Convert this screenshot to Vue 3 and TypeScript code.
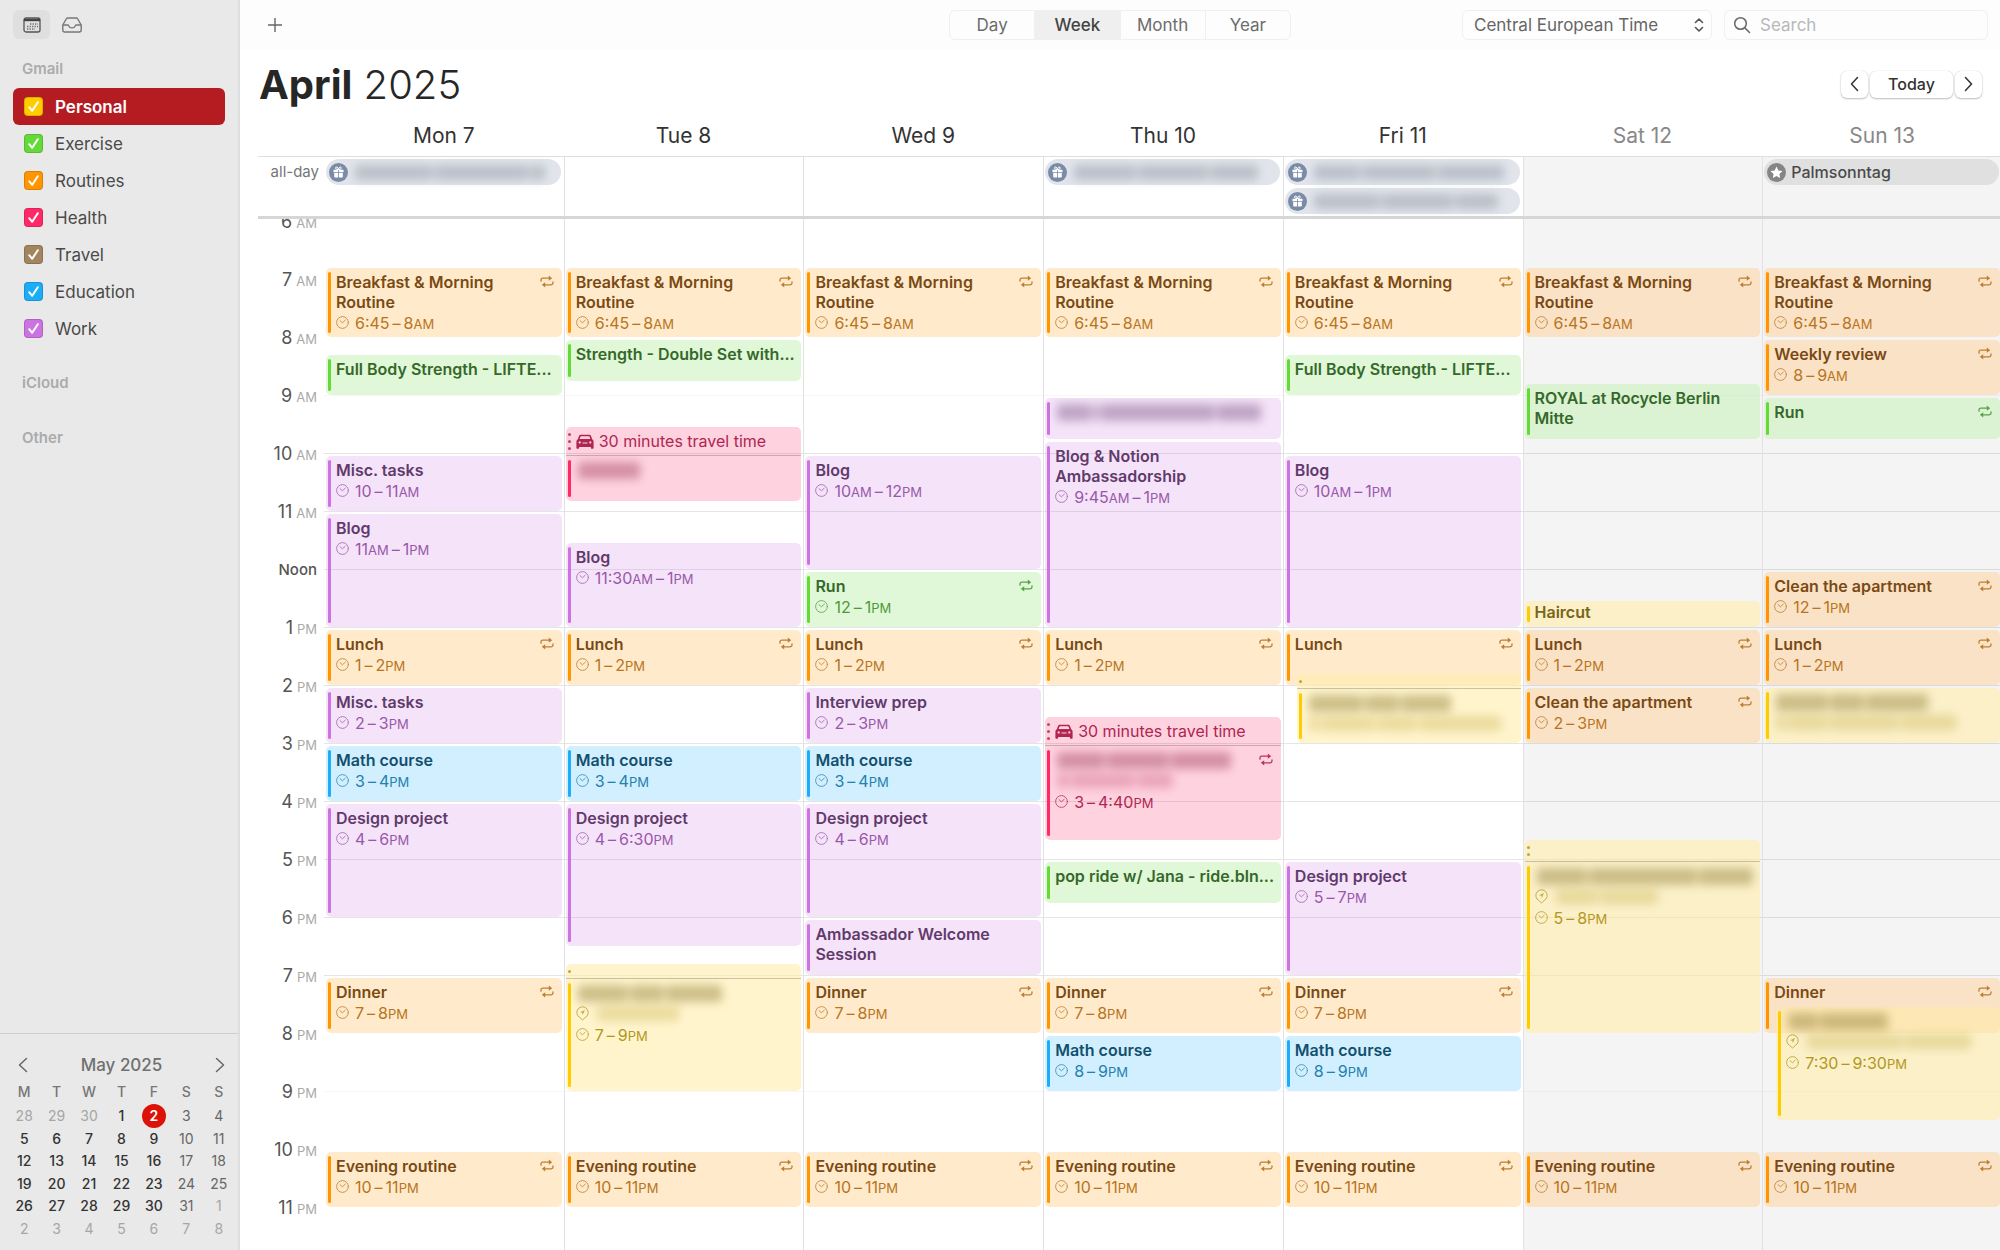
<script setup lang="ts">
import { ref } from 'vue'

type Tone = 'yellow' | 'green' | 'orange' | 'pink' | 'brown' | 'blue' | 'purple'

interface CalendarItem {
  name: string
  tone: Tone
}

interface CalendarEvent {
  tone: Tone
  start: number
  end: number
  title?: string
  /* word widths of a hidden title or place */
  hiddenTitle?: number[]
  hiddenPlace?: number[]
  pin?: boolean
  from?: string
  fromUnit?: string
  to?: string
  toUnit?: string
  repeats?: boolean
  travel?: number
  travelLabel?: string
  dots?: number
  inset?: boolean
  compact?: boolean
}

interface AllDayItem {
  kind: 'birthday' | 'holiday'
  title?: string
  hidden?: number[]
}

interface Day {
  label: string
  weekend: boolean
  allDay: AllDayItem[]
  events: CalendarEvent[]
}

const HOUR = 58
const FIRST_HOUR = 6

const px = (hours: number): number => Math.round(hours * HOUR)
const row = (time: number): number => px(time - FIRST_HOUR) + 3

const calendars: CalendarItem[] = [
  { name: 'Personal', tone: 'yellow' },
  { name: 'Exercise', tone: 'green' },
  { name: 'Routines', tone: 'orange' },
  { name: 'Health', tone: 'pink' },
  { name: 'Travel', tone: 'brown' },
  { name: 'Education', tone: 'blue' },
  { name: 'Work', tone: 'purple' },
]
const checked = ref<string[]>(calendars.map((c) => c.name))
const selected = ref('Personal')

const views = ['Day', 'Week', 'Month', 'Year']
const view = ref('Week')
const timezone = ref('Central European Time')
const query = ref('')

const hours = Array.from({ length: 18 }, (_, i) => {
  const h = FIRST_HOUR + i
  return { h, number: h > 12 ? h - 12 : h, unit: h < 12 ? 'AM' : 'PM' }
})
const lineTone = (h: number): string => (h >= 10 && h <= 19 ? 'strong' : h === 9 || h === 21 ? 'faint' : '')

const routine = (title: string, start: number, end: number, from: string, to: string, toUnit: string): CalendarEvent => ({
  tone: 'orange', title, start, end, from, to, toUnit, repeats: true,
})
const breakfast = () => routine('Breakfast & Morning Routine', 6.75, 8, '6:45', '8', 'AM')
const lunch = () => routine('Lunch', 13, 14, '1', '2', 'PM')
const dinner = () => routine('Dinner', 19, 20, '7', '8', 'PM')
const evening = () => routine('Evening routine', 22, 23, '10', '11', 'PM')
const work = (title: string, start: number, end: number, from: string, fromUnit: string, to: string, toUnit: string): CalendarEvent => ({
  tone: 'purple', title, start, end, from, fromUnit, to, toUnit,
})
const math = (start: number, from: string, to: string): CalendarEvent => ({
  tone: 'blue', title: 'Math course', start, end: start + 1, from, to, toUnit: 'PM',
})
const sport = (title: string, start: number, end: number, repeats = false): CalendarEvent => ({
  tone: 'green', title, start, end, repeats,
})

const days: Day[] = [
  {
    label: 'Mon 7',
    weekend: false,
    allDay: [{ kind: 'birthday', hidden: [78, 94, 14] }],
    events: [
      breakfast(),
      sport('Full Body Strength - LIFTE...', 8.25, 9),
      work('Misc. tasks', 10, 11, '10', '', '11', 'AM'),
      work('Blog', 11, 13, '11', 'AM', '1', 'PM'),
      lunch(),
      work('Misc. tasks', 14, 15, '2', '', '3', 'PM'),
      math(15, '3', '4'),
      work('Design project', 16, 18, '4', '', '6', 'PM'),
      dinner(),
      evening(),
    ],
  },
  {
    label: 'Tue 8',
    weekend: false,
    allDay: [],
    events: [
      breakfast(),
      sport('Strength - Double Set with...', 8, 8.75),
      { tone: 'pink', start: 9.5, end: 10.8334, travel: 0.5, travelLabel: '30 minutes travel time', dots: 3, hiddenTitle: [62] },
      work('Blog', 11.5, 13, '11:30', 'AM', '1', 'PM'),
      lunch(),
      math(15, '3', '4'),
      work('Design project', 16, 18.5, '4', '', '6:30', 'PM'),
      { tone: 'yellow', start: 18.75, end: 21, travel: 0.25, dots: 1, hiddenTitle: [50, 34, 56], hiddenPlace: [82], pin: true, from: '7', to: '9', toUnit: 'PM' },
      evening(),
    ],
  },
  {
    label: 'Wed 9',
    weekend: false,
    allDay: [],
    events: [
      breakfast(),
      work('Blog', 10, 12, '10', 'AM', '12', 'PM'),
      { ...sport('Run', 12, 13, true), from: '12', to: '1', toUnit: 'PM' },
      lunch(),
      work('Interview prep', 14, 15, '2', '', '3', 'PM'),
      math(15, '3', '4'),
      work('Design project', 16, 18, '4', '', '6', 'PM'),
      { tone: 'purple', title: 'Ambassador Welcome Session', start: 18, end: 19 },
      dinner(),
      evening(),
    ],
  },
  {
    label: 'Thu 10',
    weekend: false,
    allDay: [{ kind: 'birthday', hidden: [62, 70, 48] }],
    events: [
      breakfast(),
      { tone: 'purple', start: 9, end: 9.75, hiddenTitle: [34, 6, 114, 44] },
      work('Blog & Notion Ambassadorship', 9.75, 13, '9:45', 'AM', '1', 'PM'),
      lunch(),
      { tone: 'pink', start: 14.5, end: 16.6667, travel: 0.5, travelLabel: '30 minutes travel time', dots: 3, hiddenTitle: [48, 62, 60], hiddenPlace: [12, 64, 36], from: '3', to: '4:40', toUnit: 'PM', repeats: true },
      sport('pop ride w/ Jana - ride.bln...', 17, 17.75),
      dinner(),
      math(20, '8', '9'),
      evening(),
    ],
  },
  {
    label: 'Fri 11',
    weekend: false,
    allDay: [
      { kind: 'birthday', hidden: [46, 74, 66] },
      { kind: 'birthday', hidden: [66, 72, 42] },
    ],
    events: [
      breakfast(),
      sport('Full Body Strength - LIFTE...', 8.25, 9),
      work('Blog', 10, 13, '10', 'AM', '1', 'PM'),
      { tone: 'orange', title: 'Lunch', start: 13, end: 14, repeats: true },
      { tone: 'yellow', start: 13.75, end: 15, travel: 0.25, dots: 1, inset: true, hiddenTitle: [54, 34, 50], hiddenPlace: [10, 54, 40, 82] },
      work('Design project', 17, 19, '5', '', '7', 'PM'),
      dinner(),
      math(20, '8', '9'),
      evening(),
    ],
  },
  {
    label: 'Sat 12',
    weekend: true,
    allDay: [],
    events: [
      breakfast(),
      sport('ROYAL at Rocycle Berlin Mitte', 8.75, 9.75),
      { tone: 'yellow', title: 'Haircut', start: 12.5, end: 13, compact: true },
      lunch(),
      routine('Clean the apartment', 14, 15, '2', '3', 'PM'),
      { tone: 'yellow', start: 16.62, end: 20, travel: 0.38, dots: 2, hiddenTitle: [50, 108, 54], hiddenPlace: [42, 58], pin: true, from: '5', to: '8', toUnit: 'PM' },
      evening(),
    ],
  },
  {
    label: 'Sun 13',
    weekend: true,
    allDay: [{ kind: 'holiday', title: 'Palmsonntag' }],
    events: [
      breakfast(),
      routine('Weekly review', 8, 9, '8', '9', 'AM'),
      sport('Run', 9, 9.75, true),
      routine('Clean the apartment', 12, 13, '12', '1', 'PM'),
      lunch(),
      { tone: 'yellow', start: 14, end: 15, hiddenTitle: [52, 34, 62], hiddenPlace: [10, 38, 70, 56] },
      { tone: 'orange', title: 'Dinner', start: 19, end: 20, repeats: true },
      { tone: 'yellow', start: 19.5, end: 21.5, inset: true, hiddenTitle: [30, 68], hiddenPlace: [96, 66], pin: true, from: '7:30', to: '9:30', toUnit: 'PM' },
      evening(),
    ],
  },
]

const weekdays = ['M', 'T', 'W', 'T', 'F', 'S', 'S']
const weeks: number[][] = [
  [28, 29, 30, 1, 2, 3, 4],
  [5, 6, 7, 8, 9, 10, 11],
  [12, 13, 14, 15, 16, 17, 18],
  [19, 20, 21, 22, 23, 24, 25],
  [26, 27, 28, 29, 30, 31, 1],
  [2, 3, 4, 5, 6, 7, 8],
]
const dateClass = (w: number, d: number, date: number): string => {
  if ((w === 0 && date > 20) || (w > 3 && date < 20)) return 'outside'
  if (w === 0 && date === 2) return 'today'
  return d > 4 ? 'rest' : ''
}
</script>

<template>
  <div class="app">
    <aside class="sidebar">
      <div class="modes">
        <button class="mode active" type="button" aria-label="Calendars">
          <svg width="18" height="16" viewBox="0 0 18 16" fill="none">
            <rect x="1" y="1" width="16" height="14" rx="2" stroke="#555" stroke-width="1.3" />
            <path d="M1 1.8h16v2.4H1z" fill="#444" />
            <path d="M7 7h8M4 9.5h11M4 12h8" stroke="#777" stroke-width="1.3" stroke-dasharray="1.4 1.1" />
          </svg>
        </button>
        <button class="mode" type="button" aria-label="Inbox">
          <svg width="20" height="16" viewBox="0 0 20 16" fill="none" stroke="#777" stroke-width="1.4" stroke-linejoin="round">
            <path d="M.8 8 4.2 2Q4.8 1 6 1h8q1.200 0 1.800 1l3.400 6v5q0 2-2 2H2.800q-2 0-2-2z" />
            <path d="M.8 8h4.700q1 0 1.300.9.800 2 3.200 2t3.200-2q.3-.9 1.300-.9h4.700" />
          </svg>
        </button>
      </div>

      <h2 class="group">Gmail</h2>
      <ul class="calendars">
        <li v-for="cal in calendars" :key="cal.name" class="calendar" :class="{ selected: cal.name === selected }">
          <label class="calendar-label" :class="cal.tone">
            <span class="check">
              <input v-model="checked" type="checkbox" :value="cal.name" />
              <svg width="19" height="19" viewBox="0 0 19 19" fill="none" stroke="#fff" stroke-width="2" stroke-linecap="round" stroke-linejoin="round">
                <path d="m5.200 10.200 3 3.600 5.600-8.600" />
              </svg>
            </span>
            {{ cal.name }}
          </label>
        </li>
      </ul>
      <h2 class="group spaced">iCloud</h2>
      <h2 class="group spaced">Other</h2>

      <section class="mini">
        <header class="mini-head">
          <button class="plain" type="button" aria-label="Previous month">
            <svg width="10" height="16" viewBox="0 0 10 16" fill="none" stroke="#666" stroke-width="1.500" stroke-linecap="round" stroke-linejoin="round"><path d="M8.500 1.500 1.500 8l7 6.500" /></svg>
          </button>
          <h3>May 2025</h3>
          <button class="plain" type="button" aria-label="Next month">
            <svg width="10" height="16" viewBox="0 0 10 16" fill="none" stroke="#666" stroke-width="1.500" stroke-linecap="round" stroke-linejoin="round"><path d="M1.500 1.500 8.500 8l-7 6.500" /></svg>
          </button>
        </header>
        <table class="month">
          <thead>
            <tr><th v-for="(d, i) in weekdays" :key="i" scope="col">{{ d }}</th></tr>
          </thead>
          <tbody>
            <tr v-for="(week, w) in weeks" :key="w">
              <td v-for="(date, d) in week" :key="d"><span class="date" :class="dateClass(w, d, date)">{{ date }}</span></td>
            </tr>
          </tbody>
        </table>
      </section>
    </aside>

    <main class="main">
      <header class="toolbar">
        <button class="plain add" type="button" aria-label="New event">
          <svg width="16" height="16" viewBox="0 0 16 16" stroke="#666" stroke-width="1.400"><path d="M8 1v14M1 8h14" /></svg>
        </button>
        <div class="segments">
          <button v-for="v in views" :key="v" type="button" class="segment" :class="{ on: v === view }" :aria-pressed="v === view" @click="view = v">{{ v }}</button>
        </div>
        <div class="tools">
          <div class="zone">
            <select v-model="timezone" aria-label="Time zone">
              <option>Central European Time</option>
            </select>
            <svg width="10" height="16" viewBox="0 0 10 16" fill="none" stroke="#555" stroke-width="1.600" stroke-linecap="round" stroke-linejoin="round"><path d="M1.500 5.500 5 2l3.500 3.500M1.500 10.500 5 14l3.500-3.500" /></svg>
          </div>
          <label class="search">
            <svg width="18" height="18" viewBox="0 0 18 18" fill="none" stroke="#666" stroke-width="1.500" stroke-linecap="round"><circle cx="7.500" cy="7.500" r="5.800" /><path d="m12 12 4.500 4.500" /></svg>
            <input v-model="query" type="text" placeholder="Search" aria-label="Search" />
          </label>
        </div>
      </header>

      <div class="heading">
        <h1><b>April</b> 2025</h1>
        <nav class="pager">
          <button type="button" class="step" aria-label="Previous week">
            <svg width="9" height="16" viewBox="0 0 9 16" fill="none" stroke="#333" stroke-width="1.500" stroke-linecap="round" stroke-linejoin="round"><path d="M7.500 1.500 1.500 8l6 6.500" /></svg>
          </button>
          <button type="button" class="today-button">Today</button>
          <button type="button" class="step" aria-label="Next week">
            <svg width="9" height="16" viewBox="0 0 9 16" fill="none" stroke="#333" stroke-width="1.500" stroke-linecap="round" stroke-linejoin="round"><path d="m1.500 1.500 6 6.500-6 6.500" /></svg>
          </button>
        </nav>
      </div>

      <div class="week">
        <div class="columns names">
          <span></span>
          <h2 v-for="day in days" :key="day.label" :class="{ weekend: day.weekend }">{{ day.label }}</h2>
        </div>

        <div class="columns all-day">
          <span class="all-day-label">all-day</span>
          <div v-for="day in days" :key="day.label" class="all-day-cell" :class="{ weekend: day.weekend }">
            <div v-for="(item, i) in day.allDay" :key="i" class="pill" :class="item.kind">
              <svg v-if="item.kind === 'birthday'" width="19" height="19" viewBox="0 0 19 19">
                <circle cx="9.500" cy="9.500" r="9.500" fill="#7a8ba8" />
                <path d="M4.500 6.800h4.600v2.400H4.500zM9.900 6.800h4.600v2.400H9.900zM5.200 9.900h3.900v4.600H6q-.8 0-.8-.8zM9.900 9.900h3.900v3.800q0 .8-.8.8H9.900z" fill="#fff" />
                <path d="M9.400 6.600Q6.400 6.600 6.500 5q.2-1.200 1.400-1 1.200.3 1.500 2.600.3-2.300 1.500-2.600 1.200-.2 1.400 1 .1 1.600-2.900 1.600" fill="none" stroke="#fff" />
              </svg>
              <svg v-else width="19" height="19" viewBox="0 0 19 19">
                <circle cx="9.500" cy="9.500" r="9.500" fill="#858585" />
                <path d="m9.500 3.600 1.800 3.900 4.200.5-3.100 2.900.8 4.200-3.700-2.100-3.700 2.100.8-4.200-3.100-2.900 4.200-.5z" fill="#fff" />
              </svg>
              <span v-if="item.title">{{ item.title }}</span>
              <span v-else class="hidden-line"><i v-for="(w, k) in item.hidden" :key="k" :style="{ width: w + 'px' }"></i></span>
            </div>
          </div>
        </div>

        <div class="columns schedule">
          <div class="hours">
            <div v-for="hour in hours" :key="hour.h" class="hour">
              <span v-if="hour.h === 12" class="noon">Noon</span>
              <template v-else>{{ hour.number }}<small>{{ hour.unit }}</small></template>
            </div>
          </div>
          <div class="lines">
            <div v-for="hour in hours" :key="hour.h" class="line" :class="lineTone(hour.h)"></div>
          </div>
          <div v-for="(day, c) in days" :key="day.label" class="day" :class="{ weekend: day.weekend }" :style="{ gridColumn: c + 2 }">
            <article
              v-for="(event, i) in day.events"
              :key="i"
              class="event"
              :class="[event.tone, { inset: event.inset, compact: event.compact }]"
              :style="{ gridRow: `${row(event.start)} / ${row(event.end)}` }"
            >
              <div v-if="event.travel" class="travel" :style="{ height: px(event.travel) + 'px' }">
                <span class="dots"><i v-for="n in event.dots" :key="n"></i></span>
                <template v-if="event.travelLabel">
                  <svg width="18" height="15" viewBox="0 0 18 15" fill="currentColor">
                    <path fill-rule="evenodd" d="M4.600.8h8.800q1.100 0 1.500 1l1.300 3.400Q17.600 6 17.600 7.500V14q0 .7-.7.700h-1.300q-.7 0-.7-.7v-1.100H3.100V14q0 .7-.7.700H1.100q-.7 0-.7-.7V7.500Q.4 6 1.800 5.200L3.100 1.800q.4-1 1.500-1M4.700 2.300 3.600 5h10.800l-1.100-2.700zM3.700 7.300a1.100 1.100 0 1 0 .01 0M14.300 7.300a1.100 1.100 0 1 0 .01 0M6.500 8.400v1.200h5V8.400z" />
                  </svg>
                  <span>{{ event.travelLabel }}</span>
                </template>
              </div>
              <div class="body">
                <span class="bar"></span>
                <div class="content">
                  <h3 v-if="event.title">{{ event.title }}</h3>
                  <p v-else class="hidden-line title-line"><i v-for="(w, k) in event.hiddenTitle" :key="k" :style="{ width: w + 'px' }"></i></p>
                  <p v-if="event.hiddenPlace" class="meta">
                    <svg v-if="event.pin" class="glyph" width="13" height="15" viewBox="0 0 13 15" fill="none" stroke="currentColor">
                      <path d="M6.500 14 3.900 11.600a5.700 5.700 0 1 1 5.200 0z" />
                      <path d="m9 4-5 2.200 2.300.5.500 2.300z" fill="currentColor" stroke="none" />
                    </svg>
                    <span class="hidden-line place-line"><i v-for="(w, k) in event.hiddenPlace" :key="k" :style="{ width: w + 'px' }"></i></span>
                  </p>
                  <p v-if="event.from" class="meta">
                    <svg class="glyph" width="13" height="13" viewBox="0 0 13 13" fill="none" stroke="currentColor" stroke-linecap="round">
                      <circle cx="6.500" cy="6.500" r="5.900" />
                      <path d="M4 4.600 6.400 6.800 9.300 4.200" />
                    </svg>
                    <time>{{ event.from }}<small>{{ event.fromUnit }}</small><span class="dash">–</span>{{ event.to }}<small>{{ event.toUnit }}</small></time>
                  </p>
                </div>
                <svg v-if="event.repeats" class="repeat" width="14" height="13" viewBox="0 0 14 13" fill="none" stroke="currentColor" stroke-width="1.300" stroke-linecap="round">
                  <path d="M1 6.200V5q0-1.800 1.800-1.800h6.400M13 6.800V8q0 1.800-1.800 1.800H4.800" />
                  <path d="m8.800.6 3.400 2.600-3.400 2.600zM5.200 7.200 1.800 9.800l3.400 2.600z" fill="currentColor" stroke="none" />
                </svg>
              </div>
            </article>
          </div>
        </div>
      </div>
    </main>
  </div>
</template>

<style>
body {
  margin: 0;
  background: #fff;
}
</style>

<style scoped>
.app {
  display: flex;
  height: 100vh;
  overflow: hidden;
  font-family: Inter, 'Liberation Sans', sans-serif;
  color: #4a4a4a;
}
h1, h2, h3, p, ul {
  margin: 0;
  padding: 0;
  font-weight: 400;
}
ul {
  list-style: none;
}
button, input, select {
  font: inherit;
  color: inherit;
  margin: 0;
}
svg {
  flex: none;
  display: block;
}
.plain {
  border: 0;
  padding: 0;
  background: none;
}

/* calendar colours: accent, block fill, title text, detail text */
.yellow { --accent: #fc0; --fill: rgb(255 237 170 / 60%); --ink: #786516; --detail: #b3971c; }
.green { --accent: #63da38; --fill: rgb(99 218 56 / 20%); --ink: #35682a; --detail: #4c9a3a; }
.orange { --accent: #ff9500; --fill: rgb(255 149 0 / 20%); --ink: #7a4a14; --detail: #b87420; }
.pink { --accent: #ff2968; --fill: rgb(255 41 104 / 21%); --ink: #8a1c42; --detail: #b02552; }
.brown { --accent: #a2845e; --fill: rgb(162 132 94 / 20%); --ink: #50402c; --detail: #7c6548; }
.blue { --accent: #1badf8; --fill: rgb(27 173 248 / 20%); --ink: #12506f; --detail: #2480ae; }
.purple { --accent: #cc73e1; --fill: rgb(204 115 225 / 20%); --ink: #613a6c; --detail: #9858aa; }
.weekend .orange { --fill: rgb(254 214 166 / 60%); }
.weekend .green { --fill: rgb(201 242 189 / 60%); }

.sidebar {
  display: flex;
  flex-direction: column;
  flex: none;
  box-sizing: border-box;
  width: 240px;
  background: #e9e9e9;
  border-right: 2px solid #dedede;
}
.modes {
  display: flex;
  gap: 3px;
  padding: 10px 13px 0;
}
.mode {
  display: grid;
  place-items: center;
  width: 37px;
  height: 29px;
  padding: 0;
  border: 0;
  border-radius: 6px;
  background: none;
}
.mode.active {
  background: #dfdfdf;
}
.group {
  padding-left: 22px;
  margin-top: 20px;
  font-size: 15px;
  line-height: 20px;
  font-weight: 600;
  color: #ababab;
}
.group.spaced {
  margin-top: 25px;
  height: 30px;
}
.calendars {
  padding: 9px 13px 1px;
}
.calendar {
  border-radius: 6px;
}
.calendar.selected {
  background: #b51c22;
  color: #fff;
  font-weight: 600;
}
.calendar-label {
  display: flex;
  align-items: center;
  gap: 12px;
  height: 37px;
  padding-left: 11px;
  font-size: 17px;
}
.check {
  display: grid;
}
.check > * {
  grid-area: 1 / 1;
}
.check input {
  appearance: none;
  box-sizing: border-box;
  width: 19px;
  height: 19px;
  border: 1px solid rgb(0 0 0 / 14%);
  border-radius: 4px;
  background: var(--accent);
}
.check svg {
  pointer-events: none;
}

.mini {
  margin-top: auto;
  border-top: 1px solid #cfcfcf;
  padding: 18px 3px 10px 8px;
}
.mini-head {
  display: flex;
  justify-content: space-between;
  align-items: center;
  padding: 0 10px;
  height: 26px;
}
.mini-head h3 {
  font-size: 17px;
  font-weight: 500;
  color: #707070;
}
.month {
  width: 100%;
  height: 161px;
  margin-top: 1px;
  table-layout: fixed;
  border-collapse: collapse;
  font-size: 14px;
  line-height: 20px;
  text-align: center;
}
.month th,
.month td {
  padding: 0;
}
.month th {
  height: 26px;
  font-weight: 500;
  color: #777;
}
.date {
  display: inline-block;
  font-weight: 500;
  color: #333;
}
.date.rest {
  font-weight: 400;
  color: #666;
}
.date.outside {
  font-weight: 400;
  color: #a6a6a6;
}
.date.today {
  width: 24px;
  margin: -2px 0;
  line-height: 24px;
  border-radius: 12px;
  background: #dc1208;
  color: #fff;
  font-weight: 600;
}

.main {
  display: flex;
  flex-direction: column;
  flex: 1;
  min-width: 0;
  overflow: hidden;
  background: #fff;
}
.toolbar {
  display: grid;
  grid-template-columns: 1fr 342px 1fr;
  align-items: center;
  flex: none;
  height: 50px;
  padding: 0 12px;
  background: #fdfdfd;
  font-size: 17px;
}
.add {
  width: 16px;
  margin-left: 15px;
}
.segments {
  display: flex;
  box-sizing: border-box;
  height: 30px;
  border: 1px solid #f0f0f0;
  border-radius: 6px;
  overflow: hidden;
}
.segment {
  flex: 1;
  padding: 0;
  border: 0;
  background: none;
  color: #6c6c6c;
}
.segment + .segment {
  border-left: 1px solid #f0f0f0;
}
.segment.on {
  background: #efefef;
  color: #444;
  font-weight: 500;
}
.tools {
  display: flex;
  justify-content: flex-end;
  gap: 12px;
}
.zone {
  display: grid;
  align-items: center;
  width: 250px;
}
.zone > * {
  grid-area: 1 / 1;
}
.zone svg {
  justify-self: end;
  margin-right: 8px;
  pointer-events: none;
}
.zone select {
  appearance: none;
  box-sizing: border-box;
  width: 100%;
  height: 30px;
  padding: 0 24px 0 11px;
  border: 1px solid #f0f0f0;
  border-radius: 6px;
  background: #fefefe;
  color: #666;
}
.search {
  display: flex;
  align-items: center;
  gap: 9px;
  box-sizing: border-box;
  width: 264px;
  height: 30px;
  padding: 0 8px;
  border: 1px solid #f0f0f0;
  border-radius: 6px;
}
.search input {
  flex: 1;
  min-width: 0;
  padding: 0;
  border: 0;
  outline: 0;
  background: none;
}
.search input::placeholder {
  color: #b8b8b8;
}

.heading {
  display: flex;
  justify-content: space-between;
  align-items: center;
  flex: none;
  height: 70px;
  padding: 0 18px 0 19px;
}
h1 {
  font-size: 40px;
  line-height: 48px;
  font-weight: 300;
  color: #262626;
}
h1 b {
  font-weight: 700;
}
.pager {
  display: flex;
  gap: 2px;
  margin-bottom: 2px;
  font-size: 16px;
  font-weight: 500;
  color: #333;
}
.pager button {
  display: grid;
  place-items: center;
  height: 27px;
  padding: 0;
  border: 0;
  border-radius: 6px;
  background: #fff;
  box-shadow: 0 1px 2px rgb(0 0 0 / 25%), 0 0 1px rgb(0 0 0 / 20%);
}
.pager .step {
  width: 27px;
}
.pager .today-button {
  width: 83px;
}

.week {
  display: flex;
  flex-direction: column;
  flex: 1;
  min-height: 0;
  margin: 0 -2px 0 18px;
}
.columns {
  display: grid;
  grid-template-columns: 66px repeat(7, minmax(0, 1fr));
}
.names h2 {
  height: 36px;
  line-height: 32px;
  font-size: 21px;
  font-weight: 400;
  text-align: center;
  color: #333;
}
.names .weekend {
  color: #888;
}
.all-day {
  flex: none;
  min-height: 59px;
  border-top: 1px solid #dedede;
  border-bottom: 3px solid #d6d6d6;
}
.all-day-label {
  padding-right: 5px;
  font-size: 15px;
  line-height: 30px;
  text-align: right;
  color: #777;
}
.all-day-cell,
.day {
  border-left: 1px solid #e2e2e2;
}
.all-day-label + .all-day-cell,
.lines + .day {
  border-left-color: transparent;
}
.all-day-cell {
  display: flex;
  flex-direction: column;
  gap: 3px;
  padding: 2px 3px 2px 1px;
}
.all-day-cell.weekend,
.day.weekend {
  background-color: rgb(0 0 0 / 4.4%);
}
.pill {
  display: flex;
  align-items: center;
  gap: 5px;
  box-sizing: border-box;
  height: 26px;
  padding-left: 3px;
  border-radius: 13px;
  background: #e1e5eb;
  font-size: 16px;
  font-weight: 500;
}
.pill.holiday {
  background: #e0e0e0;
}

/* redacted words */
.hidden-line {
  display: flex;
  align-items: center;
  gap: 2px;
  padding-left: 2px;
  opacity: 0.36;
  filter: blur(5px);
}
.hidden-line i {
  height: 15px;
  min-width: 0;
  border-radius: 3px;
  background: var(--ink, #76808f);
}
.title-line {
  height: 20px;
}
.title-line i {
  height: 17px;
}
.place-line {
  opacity: 0.26;
}
.place-line i {
  background: var(--detail);
}

.schedule {
  flex: 1;
  min-height: 0;
  grid-template-rows: minmax(0, 1fr);
  overflow: hidden;
}
.hours {
  grid-area: 1 / 1;
  margin-top: -26px;
}
.hour {
  display: flex;
  justify-content: flex-end;
  align-items: baseline;
  gap: 4px;
  height: 58px;
  padding-right: 7px;
  line-height: 58px;
  font-size: 18px;
  color: #555;
}
.hour small {
  font-size: 13px;
  color: #aaa;
}
.noon {
  font-size: 15px;
  font-weight: 500;
}
.lines {
  grid-area: 1 / 2 / 2 / -1;
  padding-top: 2px;
}
.line {
  box-sizing: border-box;
  height: 58px;
}
.line.strong {
  border-top: 1px solid rgb(0 0 0 / 10%);
}
.line.faint {
  border-top: 1px solid rgb(0 0 0 / 3%);
}
.day {
  display: grid;
  grid-row: 1;
  grid-template-columns: minmax(0, 1fr);
  grid-template-rows: repeat(1031, 1px);
}
.event {
  grid-column: 1;
  display: flex;
  flex-direction: column;
  min-height: 0;
  margin: 3px 2px 0 1px;
  border-radius: 5px;
  background: var(--fill);
  color: var(--detail);
  font-size: 16px;
  overflow: hidden;
}
.event.inset {
  margin-left: 13px;
}
.travel {
  display: flex;
  align-items: center;
  flex: none;
  gap: 5px;
  box-sizing: border-box;
  padding-left: 2px;
  border-bottom: 1px solid rgb(0 0 0 / 20%);
}
.dots {
  display: grid;
  gap: 4px;
}
.dots i {
  width: 3px;
  height: 3px;
  border-radius: 2px;
  background: var(--detail);
  opacity: 0.8;
}
.body {
  display: flex;
  flex: 1;
  gap: 5px;
  min-height: 0;
  padding: 4px 3px 4px 2px;
}
.bar {
  flex: none;
  width: 3px;
  border-radius: 2px;
  background: var(--accent);
}
.content {
  flex: 1;
  min-width: 0;
}
.content h3 {
  font-size: 16px;
  line-height: 20px;
  font-weight: 600;
  color: var(--ink);
}
.compact .body {
  padding: 5px 3px 5px 2px;
}
.compact h3 {
  margin-top: -4px;
}
.meta {
  display: flex;
  align-items: center;
  gap: 6px;
  height: 21px;
}
.meta small {
  font-size: 13px;
}
.dash {
  margin: 0 3px;
}
.glyph {
  opacity: 0.75;
}
.repeat {
  margin: 3px 5px 0 0;
  opacity: 0.9;
}
</style>
